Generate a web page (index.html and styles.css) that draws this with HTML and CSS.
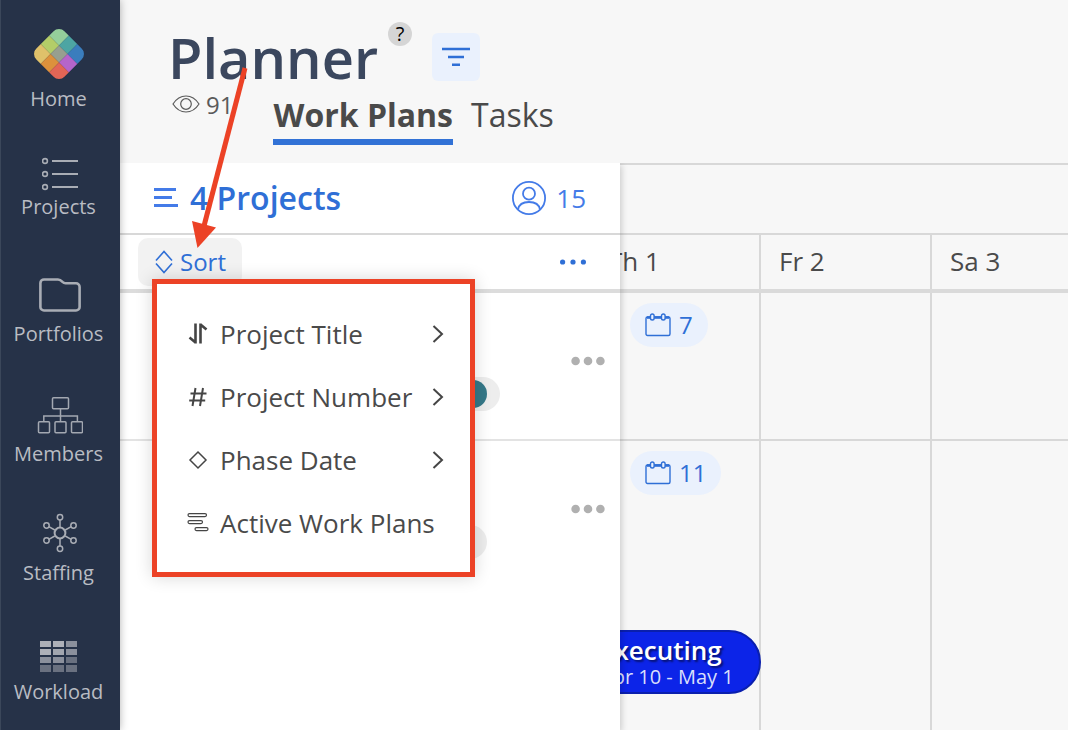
FILE: index.html
```html
<!DOCTYPE html>
<html lang="en">
<head>
  <meta charset="UTF-8">
  <meta name="viewport" content="width=device-width, initial-scale=1.0">
  <title>Planner</title>
  <link rel="stylesheet" href="styles.css">
</head>
<body>
  <nav class="sidebar">
    <a href="#" class="nav-item nav-home">
      <svg width="52" height="62" viewBox="0 0 52 62">
        <defs>
          <clipPath id="logoClip"><rect x="-20" y="-20" width="40" height="40" rx="8"/></clipPath>
        </defs>
        <g transform="translate(26 31) rotate(45)" clip-path="url(#logoClip)">
          <rect x="-20" y="-20" width="14" height="14" fill="#95cf9b"/>
          <rect x="-6" y="-20" width="12" height="14" fill="#4da5a3"/>
          <rect x="6" y="-20" width="14" height="14" fill="#3a7dbd"/>
          <rect x="-20" y="-6" width="14" height="12" fill="#b3cd68"/>
          <rect x="-6" y="-6" width="12" height="12" fill="#979f8f"/>
          <rect x="6" y="-6" width="14" height="12" fill="#b565ca"/>
          <rect x="-20" y="6" width="14" height="14" fill="#dfc16a"/>
          <rect x="-6" y="6" width="12" height="14" fill="#dc913c"/>
          <rect x="6" y="6" width="14" height="14" fill="#e26556"/>
        </g>
      </svg>
      <span>Home</span>
    </a>
    <a href="#" class="nav-item nav-projects">
      <svg class="shift" width="36" height="38" viewBox="0 0 36 38" fill="none" stroke="#a9adb5" stroke-width="2">
        <path d="M10 6h26M10 19h26M10 32h26"/>
        <g stroke-width="1.600"><circle cx="3" cy="6" r="2.400"/><circle cx="3" cy="19" r="2.400"/><circle cx="3" cy="32" r="2.400"/></g>
      </svg>
      <span>Projects</span>
    </a>
    <a href="#" class="nav-item nav-portfolios">
      <svg class="shift" width="42" height="50" viewBox="0 0 42 50" fill="none" stroke="#a9adb5" stroke-width="2.600" stroke-linejoin="round">
        <path d="M5 9.500h14c2 0 3 .8 4.500 2.400 1 1 1.800 1.400 3 1.400H37a3.600 3.600 0 0 1 3.600 3.600v20a3.600 3.600 0 0 1-3.600 3.600H5a3.600 3.600 0 0 1-3.600-3.600V13A3.600 3.600 0 0 1 5 9.500z"/>
      </svg>
      <span>Portfolios</span>
    </a>
    <a href="#" class="nav-item nav-members">
      <svg class="shift" width="46" height="50" viewBox="0 0 46 50" fill="none" stroke="#a3a8b1" stroke-width="1.500">
        <rect x="15.500" y="7.700" width="16" height="11" rx="1"/>
        <rect x="1.500" y="31.700" width="11" height="11" rx="1"/>
        <rect x="18" y="31.700" width="11" height="11" rx="1"/>
        <rect x="34.500" y="31.700" width="11" height="11" rx="1"/>
        <path d="M23.500 19v12M6.800 31v-5h33.600v5"/>
      </svg>
      <span>Members</span>
    </a>
    <a href="#" class="nav-item">
      <svg class="shift" width="36" height="52" viewBox="0 0 36 52" fill="none" stroke="#a9adb5" stroke-width="1.500">
        <circle cx="18" cy="26" r="5.400" stroke-width="2"/>
        <path d="M18 20v-7M18 32v7M12.800 23l-6-3.400M23.200 23l6-3.400M12.800 29l-6 3.400M23.200 29l6 3.400"/>
        <circle cx="18" cy="10.200" r="2.700"/><circle cx="18" cy="41.800" r="2.700"/>
        <circle cx="4.500" cy="18.500" r="2.700"/><circle cx="31.500" cy="18.500" r="2.700"/>
        <circle cx="4.500" cy="33.500" r="2.700"/><circle cx="31.500" cy="33.500" r="2.700"/>
      </svg>
      <span>Staffing</span>
    </a>
    <a href="#" class="nav-item">
      <svg width="38" height="42" viewBox="0 0 38 42">
        <g fill="#adb0b8">
          <path d="M0 5h11v6H0zM13 5h11v6H13zM0 13h11v6H0z"/>
          <path d="M13 13h11v6H13z" opacity=".92"/>
          <path d="M26 5h11v6H26zM26 13h11v6H26zM0 21h11v6H0zM13 21h11v6H13z" opacity=".75"/>
          <path d="M26 21h11v6H26zM0 29h11v7H0zM13 29h11v7H13zM26 29h11v7H26z" opacity=".5"/>
        </g>
      </svg>
      <span>Workload</span>
    </a>
  </nav>

  <main class="main">
    <header class="header">
      <div class="title-row">
        <h1>Planner</h1>
        <button class="help" type="button">?</button>
        <button class="filter" type="button" aria-label="Filter">
          <svg width="28" height="20" viewBox="0 0 28 20" stroke="#2f6fd6" stroke-width="2.600">
            <path d="M0 2h28M6 10h16M10 17.700h8"/>
          </svg>
        </button>
      </div>
      <div class="tab-row">
        <div class="views">
          <svg width="28" height="18" viewBox="0 0 28 18" fill="none" stroke="#5a5a5a" stroke-width="1.200">
            <path d="M1 9C4.500 3.500 9 1 14 1s9.500 2.500 13 8c-3.500 5.500-8 8-13 8S4.500 14.500 1 9z"/>
            <circle cx="14" cy="9" r="5.300"/>
          </svg>
          <span>91</span>
        </div>
        <div class="tabs">
          <a href="#" class="tab active">Work Plans</a>
          <a href="#" class="tab">Tasks</a>
        </div>
      </div>
    </header>

    <div class="board">
      <section class="panel">
        <div class="panel-head">
          <svg width="24" height="20" viewBox="0 0 24 20" stroke="#447be8" stroke-width="3">
            <path d="M0 1.500h22M0 9.500h18M0 17.500h24"/>
          </svg>
          <h2>4 Projects</h2>
          <svg class="people" width="34" height="34" viewBox="0 0 34 34" fill="none" stroke="#447be8" stroke-width="1.800">
            <circle cx="17" cy="17" r="16.100"/>
            <circle cx="17" cy="12.700" r="6"/>
            <path d="M6 28.500C7 23 11 21 17 21s10 2 11 7.500"/>
          </svg>
          <span class="people-count">15</span>
        </div>

        <div class="sort-row">
          <button class="sort" type="button">
            <svg width="18" height="24" viewBox="0 0 18 24" fill="none" stroke="#2f6fd6" stroke-width="1.600">
              <path d="M1 10.500L9 1.500l8 9M1 13.500l8 9 8-9"/>
            </svg>
            Sort
          </button>
          <button class="more" type="button" aria-label="More">
            <svg width="26" height="6" viewBox="0 0 26 6" fill="#2f6fd6">
              <circle cx="2.600" cy="3" r="2.600"/><circle cx="13" cy="3" r="2.600"/><circle cx="23.400" cy="3" r="2.600"/>
            </svg>
          </button>

          <div class="menu">
            <button class="menu-item" type="button">
              <svg width="22" height="24" viewBox="0 0 22 24" fill="none" stroke="#454545" stroke-width="2.600">
                <path d="M8.500 1.500v20M8.500 20.500L2.500 15.500M13.500 21.500v-20M13.500 2.500l6 5"/>
              </svg>
              <span>Project Title</span>
              <svg class="chevron" width="12" height="20" viewBox="0 0 12 20"><path d="M1.500 2l8.500 8-8.500 8"/></svg>
            </button>
            <button class="menu-item" type="button">
              <svg width="22" height="24" viewBox="0 0 22 24" fill="none" stroke="#454545" stroke-width="2">
                <path d="M8.500 3l-3 18M16 3l-3 18M3.500 8.500h16M2.200 15.500h16"/>
              </svg>
              <span>Project Number</span>
              <svg class="chevron" width="12" height="20" viewBox="0 0 12 20"><path d="M1.500 2l8.500 8-8.500 8"/></svg>
            </button>
            <button class="menu-item" type="button">
              <svg width="22" height="24" viewBox="0 0 22 24" fill="none" stroke="#454545" stroke-width="1.500">
                <path d="M11 4l8 8-8 8-8-8z"/>
              </svg>
              <span>Phase Date</span>
              <svg class="chevron" width="12" height="20" viewBox="0 0 12 20"><path d="M1.500 2l8.500 8-8.500 8"/></svg>
            </button>
            <button class="menu-item" type="button">
              <svg width="22" height="24" viewBox="0 0 22 24" fill="none" stroke="#454545" stroke-width="1.200">
                <rect x="1" y="2.600" width="18.500" height="3" rx="1.500"/>
                <rect x="1" y="9.600" width="14.500" height="3" rx="1.500"/>
                <rect x="8" y="16.600" width="13" height="3" rx="1.500"/>
              </svg>
              <span>Active Work Plans</span>
            </button>
          </div>
        </div>

        <div class="project">
          <button class="project-more" type="button" aria-label="Project options">
            <svg width="34" height="10" viewBox="0 0 34 10" fill="#b0b0b0">
              <circle cx="4.600" cy="5" r="4.300"/><circle cx="17" cy="5" r="4.300"/><circle cx="29.400" cy="5" r="4.300"/>
            </svg>
          </button>
          <div class="pill"><span class="avatar"></span></div>
        </div>
        <div class="project last">
          <button class="project-more" type="button" aria-label="Project options">
            <svg width="34" height="10" viewBox="0 0 34 10" fill="#b0b0b0">
              <circle cx="4.600" cy="5" r="4.300"/><circle cx="17" cy="5" r="4.300"/><circle cx="29.400" cy="5" r="4.300"/>
            </svg>
          </button>
          <div class="pill short"></div>
        </div>
      </section>

      <section class="timeline">
        <div class="month"></div>
        <div class="days">
          <div class="day">Th 1</div>
          <div class="day">Fr 2</div>
          <div class="day">Sa 3</div>
        </div>
        <div class="week">
          <div class="cell">
            <button class="chip" type="button">
              <svg width="26" height="24" viewBox="0 0 26 24" fill="none" stroke="#2f6fd6" stroke-width="1.400">
                <rect x="1" y="4" width="24" height="18.500" rx="1.500"/>
                <path d="M2 4.500h22" stroke-width="2.600"/>
                <rect x="5.500" y="1" width="3.600" height="6" rx="1.800" fill="#eaf1fd"/>
                <rect x="16.500" y="1" width="3.600" height="6" rx="1.800" fill="#eaf1fd"/>
              </svg>
              7
            </button>
          </div>
          <div class="cell"></div>
          <div class="cell"></div>
        </div>
        <div class="week last">
          <div class="cell">
            <button class="chip" type="button">
              <svg width="26" height="24" viewBox="0 0 26 24" fill="none" stroke="#2f6fd6" stroke-width="1.400">
                <rect x="1" y="4" width="24" height="18.500" rx="1.500"/>
                <path d="M2 4.500h22" stroke-width="2.600"/>
                <rect x="5.500" y="1" width="3.600" height="6" rx="1.800" fill="#eaf1fd"/>
                <rect x="16.500" y="1" width="3.600" height="6" rx="1.800" fill="#eaf1fd"/>
              </svg>
              11
            </button>
            <div class="phase">
              <strong>Executing</strong>
              <span>Apr 10 - May 1</span>
            </div>
          </div>
          <div class="cell"></div>
          <div class="cell"></div>
        </div>
      </section>
    </div>
  </main>

  <svg class="pointer" width="60" height="184" viewBox="0 0 60 184" aria-hidden="true">
    <path d="M55 4L14 162" stroke="#ec4226" stroke-width="5" fill="none"/>
    <path d="M2 157l24 6.500L7.500 184z" fill="#ec4226"/>
  </svg>
</body>
</html>
```
FILE: styles.css
```css
* {
  box-sizing: border-box;
}

body {
  margin: 0;
  min-height: 100vh;
  display: flex;
  overflow: hidden;
  position: relative;
  font-family: "Open Sans", "Noto Sans", sans-serif;
  font-size: 26px;
  color: #4a4a4a;
  background-color: #f7f7f7;
}

button {
  font: inherit;
  color: inherit;
  border: none;
  padding: 0;
  background: none;
  cursor: pointer;
}

a {
  color: inherit;
  text-decoration: none;
}

h1,
h2 {
  margin: 0;
  font-weight: 600;
}

svg {
  display: block;
  flex-shrink: 0;
}

/* sidebar */
.sidebar {
  width: 120px;
  height: 100vh;
  flex-shrink: 0;
  padding-right: 4px;
  background-color: #263248;
  border-left: 1px solid #3b475a;
  box-shadow: 0 0 8px rgba(0, 0, 0, 0.3);
  z-index: 3;
}

.nav-item {
  height: 119px;
  display: flex;
  flex-direction: column;
  align-items: center;
  justify-content: flex-end;
  font-size: 20px;
  line-height: 28px;
  color: #b9bcc3;
}

.nav-home {
  height: 113px;
}

.nav-projects {
  height: 108px;
}

.nav-portfolios {
  height: 127px;
}

.nav-members {
  height: 120px;
}

.shift {
  margin-left: 3px;
}

/* header */
.main {
  flex: 1;
  min-width: 0;
  height: 100vh;
  display: flex;
  flex-direction: column;
}

.header {
  height: 163px;
  padding: 22px 48px 0;
}

.title-row {
  display: flex;
  align-items: flex-start;
}

h1 {
  font-size: 56px;
  line-height: 71px;
  color: #3b475e;
}

.help {
  width: 24px;
  height: 24px;
  margin-left: 10px;
  border-radius: 50%;
  background-color: #d5d5d5;
  color: #000;
  font-size: 20px;
  line-height: 24px;
}

.filter {
  width: 48px;
  height: 48px;
  margin: 11px 0 0 20px;
  display: flex;
  align-items: center;
  justify-content: center;
  border-radius: 6px;
  background-color: #eaf1fd;
}

.tab-row {
  display: flex;
  gap: 40px;
  padding-left: 4px;
}

.views {
  display: flex;
  align-items: center;
  gap: 6px;
  height: 22px;
  font-size: 24px;
  color: #5a5a5a;
}

.tabs {
  display: flex;
  gap: 18px;
  font-size: 32px;
  line-height: 44px;
}

.tab {
  padding-bottom: 2px;
}

.tab.active {
  font-weight: 700;
  border-bottom: 6px solid #3272d6;
}

/* project list */
.board {
  flex: 1;
  display: flex;
  min-height: 0;
}

.panel {
  width: 500px;
  flex-shrink: 0;
  display: flex;
  flex-direction: column;
  background-color: #fff;
  box-shadow: 2px 2px 6px rgba(0, 0, 0, 0.16);
  clip-path: inset(0 -10px 0 0);
  z-index: 2;
}

.panel-head {
  height: 72px;
  display: flex;
  align-items: center;
  padding: 0 34px;
  border-bottom: 2px solid #d8d8d8;
}

.panel-head h2 {
  margin-left: 12px;
  font-size: 32px;
  line-height: 44px;
  color: #2f6fd6;
}

.people {
  margin-left: auto;
}

.people-count {
  margin-left: 10px;
  color: #447be8;
}

.sort-row {
  position: relative;
  height: 58px;
  display: flex;
  align-items: center;
  justify-content: space-between;
  padding: 0 34px 0 18px;
  border-bottom: 4px solid #dcdcdc;
}

.sort {
  height: 48px;
  display: flex;
  align-items: center;
  gap: 7px;
  padding: 0 16px 0 17px;
  border-radius: 10px;
  background-color: #f2f2f2;
  color: #2f6fd6;
  font-size: 24px;
  line-height: 32px;
}

.menu {
  position: absolute;
  left: 32px;
  top: 44px;
  width: 323px;
  padding: 18px 26px 18px 30px;
  border: 5px solid #ec4226;
  background-color: #fff;
  box-shadow: 0 0 16px rgba(0, 0, 0, 0.16);
}

.menu-item {
  width: 100%;
  height: 63px;
  display: flex;
  align-items: center;
  gap: 11px;
  line-height: 34px;
  white-space: nowrap;
}

.chevron {
  margin-left: auto;
  fill: none;
  stroke: #454545;
  stroke-width: 2;
}

.project {
  height: 148px;
  display: flex;
  flex-direction: column;
  align-items: flex-start;
  gap: 8px;
  padding: 60px 15px 0 320px;
  border-bottom: 2px solid #e3e3e3;
}

.project.last {
  flex: 1;
  border-bottom: none;
}

.project-more {
  height: 16px;
  display: flex;
  align-items: center;
  align-self: flex-end;
}

.pill {
  width: 60px;
  height: 34px;
  display: flex;
  align-items: center;
  justify-content: flex-end;
  padding-right: 13px;
  border-radius: 17px;
  background-color: #ededed;
}

.pill.short {
  width: 47px;
}

.avatar {
  width: 28px;
  height: 28px;
  border-radius: 50%;
  background-color: #357888;
}

/* timeline, scrolled a little under the list */
.timeline {
  flex: 1;
  min-width: 0;
  display: flex;
  flex-direction: column;
  margin-left: -30px;
  overflow: hidden;
}

.month {
  height: 70px;
  border-top: 2px solid #d8d8d8;
}

.days,
.week {
  display: grid;
  grid-template-columns: repeat(3, 171px);
}

.days {
  height: 60px;
  border-top: 2px solid #d8d8d8;
  border-bottom: 4px solid #dadada;
  line-height: 52px;
}

.day,
.cell {
  border-right: 2px solid #d8d8d8;
}

.day {
  padding-left: 18px;
}

.week {
  height: 148px;
  border-bottom: 2px solid #d8d8d8;
}

.week.last {
  flex: 1;
  border-bottom: none;
}

.cell {
  padding-top: 10px;
}

.chip {
  height: 44px;
  display: flex;
  align-items: center;
  gap: 8px;
  margin-left: 40px;
  padding: 0 15px;
  border-radius: 22px;
  background-color: #eaf1fd;
  color: #2f6fd6;
  font-size: 24px;
  line-height: 32px;
}

.phase {
  height: 64px;
  margin: 135px -2px 0 -20px;
  padding: 4px 0 0 28px;
  display: flex;
  flex-direction: column;
  border: 2px solid #0a1fae;
  border-radius: 32px;
  background-color: #0c24e8;
  color: #d9defb;
  font-size: 20px;
  font-weight: 500;
  line-height: 26px;
  white-space: nowrap;
}

.phase strong {
  color: #fff;
  font-size: 26px;
  font-weight: 600;
  line-height: 28px;
  text-shadow: 2px 2px 2px rgba(0, 0, 0, 0.5);
}

/* callout arrow over the page */
.pointer {
  position: absolute;
  left: 190px;
  top: 64px;
  z-index: 4;
}
```
